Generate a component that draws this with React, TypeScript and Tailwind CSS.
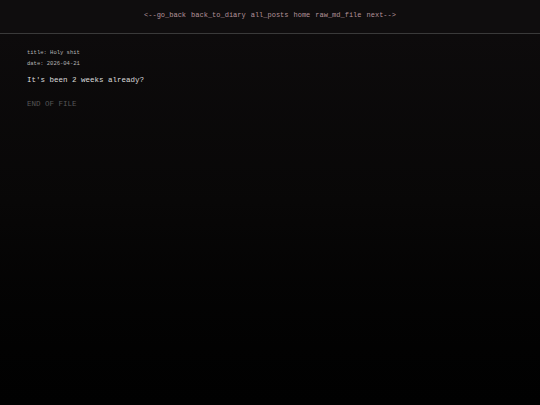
const links = ['<--go_back', 'back_to_diary', 'all_posts', 'home', 'raw_md_file', 'next-->'];

export default function App() {
  return (
    <div
      className="min-h-[405px] w-full bg-gradient-to-b from-[#0e0c0d] via-[#080707] to-[#010101]"
      style={{ fontFamily: '"Liberation Mono", "DejaVu Sans Mono", monospace' }}
    >
      {/* Nav */}
      <header className="h-[34px] border-b border-[#3a3a3a] bg-[#0f0d0e] flex items-center justify-center">
        <nav className="flex gap-[5px] text-[7px] leading-none text-[#b3929a] pb-[2px]">
          {links.map(l => (
            <a key={l} href="#" className="hover:underline">
              {l}
            </a>
          ))}
        </nav>
      </header>

      {/* Post */}
      <main className="px-[27px] pt-[16px]">
        <div className="text-[5.5px] leading-none text-[#b5b5b5] space-y-[5px]">
          <p>title: Holy shit</p>
          <p>date: 2026-04-21</p>
        </div>
        <p className="mt-[11px] text-[7.5px] leading-none text-[#dcdcdc]">It's been 2 weeks already?</p>
        <p className="mt-[16px] text-[7.5px] leading-none text-[#575757]">END OF FILE</p>
      </main>
    </div>
  );
}
